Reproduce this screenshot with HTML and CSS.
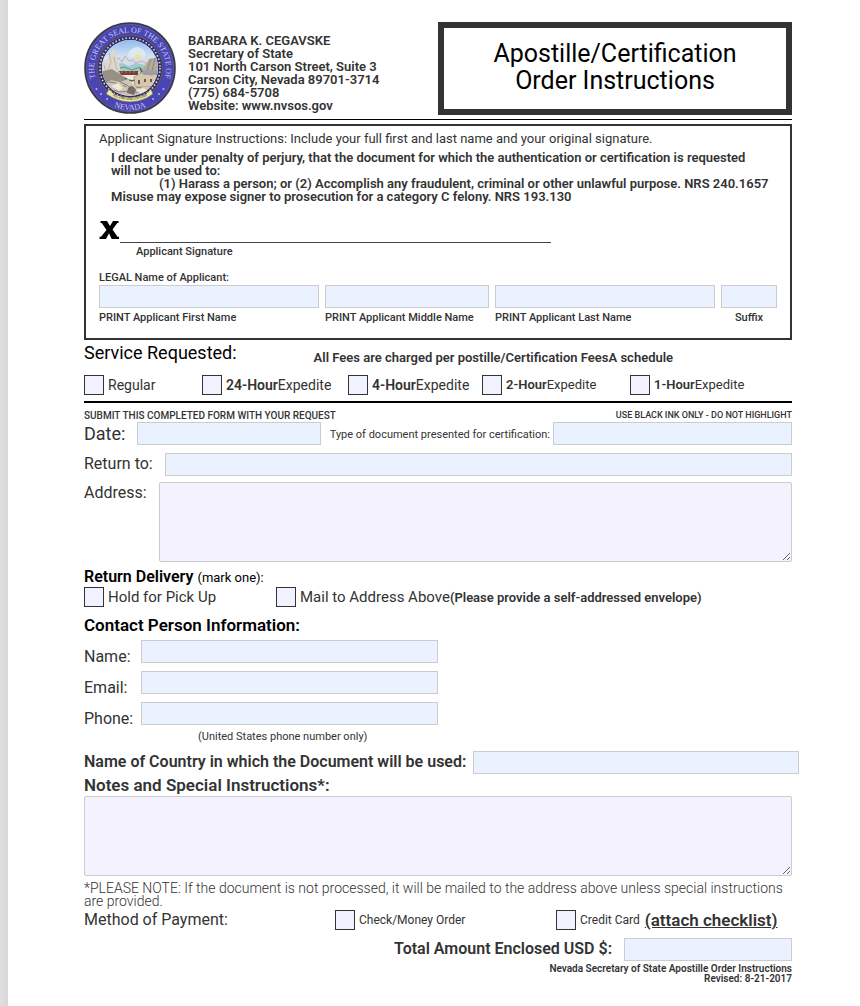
FILE: index.html
```html
<!DOCTYPE html>
<html lang="en">
<head>
<meta charset="utf-8">
<title>Apostille/Certification Order Instructions</title>
<link rel="stylesheet" href="styles.css">
</head>
<body>
<form class="sheet">
  <header class="head">
    <div class="office">
      <svg class="seal" viewBox="0 0 92 92" role="img" aria-label="The Great Seal of the State of Nevada">
        <defs>
          <path id="arc-top" d="M13.500 62A36 36 0 1 1 78.500 62"/>
          <path id="arc-bottom" d="M16 75.500A42 42 0 0 0 76 75.500"/>
          <path id="arc-motto" d="M27 73Q46 83 65 73"/>
          <clipPath id="scene"><circle cx="46" cy="46" r="28"/></clipPath>
          <linearGradient id="sky" x1="0" y1="0" x2="0" y2="1"><stop offset="0" stop-color="#8fb9ea"/><stop offset="1" stop-color="#e6effa"/></linearGradient>
        </defs>
        <circle cx="46" cy="46" r="45" fill="#4945b5" stroke="#3c3946" stroke-width="1.600"/>
        <circle cx="46" cy="46" r="43.500" fill="none" stroke="#66607f" stroke-width=".7"/>
        <circle cx="46" cy="46" r="32.500" fill="#302e6c" stroke="#5b5262" stroke-width="1.600"/>
        <circle cx="46" cy="46" r="30" fill="none" stroke="#d5d3ec" stroke-width="1.700" stroke-dasharray="1.500 2"/>
        <circle cx="46" cy="46" r="28" fill="#eeeade"/>
        <g clip-path="url(#scene)">
          <rect x="17" y="17" width="58" height="24" fill="url(#sky)"/>
          <circle cx="53" cy="34" r="9" fill="#dbe9f4"/><ellipse cx="54" cy="35" rx="4" ry="2.500" fill="#f2e48e"/>
          <path d="M22 42l8-8 5 2 6-5 5 5 5-1 6 2 6-4 12 11v8H22z" fill="#d9dce6"/>
          <path d="M31 38l4-2 3 4 3-6 4 5 4-1 2 3 7-2 6 4" fill="none" stroke="#a3acbf" stroke-width=".8"/>
          <path d="M30 43l8-2 7 3 7-3 9 2v7H34z" fill="#9fcac7"/>
          <path d="M32 47l8-2 8 3 8-3" fill="none" stroke="#5a9396"/>
          <path d="M15 41l10-5 4-10c3 3 3 9 5 12l3 12 5 5-6 10H15z" fill="#ded7ce"/>
          <path d="M25 31l2 9-3 8m6-13l2 10 4 7M20 43l3 11" fill="none" stroke="#bab2a8"/>
          <path d="M16 50l12-3 14 9 3 10-22 2z" fill="#969087"/>
          <path d="M35 49h19v4H37z" fill="#763f38"/>
          <path d="M37 50h2m2 0h2m2 0h2m2 0h2" stroke="#b0604e" stroke-width="1.500"/>
          <path d="M76 35l-11 2-5 8-4 5v8h20z" fill="#b3ac9e"/>
          <path d="M67 37l-4 12M71 36l-3 14" stroke="#8d867a" fill="none"/>
          <path d="M56 46q6 9-4 12-7 2-11-2" fill="none" stroke="#5d5953" stroke-width="1.500"/>
          <path d="M50 55l8-5 8 3 8-1v13H51z" fill="#d6c7ad" stroke="#817363" stroke-width=".6"/>
          <path d="M57 51l7-4 10 2v4H60z" fill="#9aa1a6"/>
          <path d="M54 58h2v4h-2zm6-1h2v3h-2zm6 0h2v3h-2zm5 0h2v4h-2z" fill="#695c4c"/>
          <path d="M20 63l7-5 9 2 8-3 7 7 17 2v10H24z" fill="#cdc6b9"/>
          <path d="M25 60l7 1 2 5m2-6l7 3 4 4m-17 1l6 2 10-1 8 2m-15-8l4 2m9 0l6 1" fill="none" stroke="#8b8376"/>
          <path d="M44 66q4-5 8 2l-2 5-7-2z" fill="#756d65"/>
          <path d="M27 64l7-3 5 5-4 3zm25 4l7-2 6 3-7 3z" fill="#f0e8d8"/>
        </g>
        <path d="M25 67l5 5q16 7 32 0l5-5 2 5-6 4q-17 8-34 0l-7-4z" fill="#ece6aa" stroke="#5c5644" stroke-width=".6"/>
        <text class="motto"><textPath href="#arc-motto" startOffset="50%">ALL FOR OUR COUNTRY</textPath></text>
        <text class="ring"><textPath href="#arc-top" startOffset="50%">THE GREAT SEAL OF THE STATE OF</textPath></text>
        <text class="ring"><textPath href="#arc-bottom" startOffset="50%">NEVADA</textPath></text>
        <g fill="#b9b5e2"><circle cx="12.500" cy="67" r="1"/><circle cx="17" cy="72" r="1"/><circle cx="23" cy="77" r="1"/><circle cx="79.500" cy="67" r="1"/><circle cx="75" cy="72" r="1"/><circle cx="69" cy="77" r="1"/></g>
      </svg>
      <address class="contact">BARBARA K. CEGAVSKE<br>Secretary of State<br>101 North Carson Street, Suite 3<br>Carson City, Nevada 89701-3714<br>(775) 684-5708<br>Website: www.nvsos.gov</address>
    </div>
    <h1 class="title">Apostille/Certification<br>Order Instructions</h1>
  </header>

  <section class="applicant">
    <p class="instructions">Applicant Signature Instructions: Include your full first and last name and your original signature.</p>
    <div class="declaration">
      <p class="oath">I declare under penalty of perjury, that the document for which the authentication or certification is requested will not be used to:</p>
      <p class="clause">(1) Harass a person; or (2) Accomplish any fraudulent, criminal or other unlawful purpose. NRS 240.1657</p>
      <p>Misuse may expose signer to prosecution for a category C felony. NRS 193.130</p>
    </div>
    <div class="signature">
      <svg class="cross" viewBox="0 0 20 18" aria-hidden="true"><path d="M1 0h6.500l3 5 3-5H19v2h-1.200L13 8.500l5 7.300h1.500V18h-7.300L9.500 12.300 6.500 18H0v-2.200h1.500L7 9 2.200 2H1z"/></svg>
      <span class="line"></span>
    </div>
    <p class="signature-label">Applicant Signature</p>
    <p class="legal">LEGAL Name of Applicant:</p>
    <div class="names">
      <label class="name"><input class="field" type="text">PRINT Applicant First Name</label>
      <label class="name"><input class="field" type="text">PRINT Applicant Middle Name</label>
      <label class="name"><input class="field" type="text">PRINT Applicant Last Name</label>
      <label class="name name-suffix"><input class="field" type="text">Suffix</label>
    </div>
  </section>

  <section class="service">
    <div class="service-head">
      <h2 class="service-title">Service Requested:</h2>
      <p class="fees">All Fees are charged per postille/Certification FeesA schedule</p>
    </div>
    <div class="speeds">
      <label class="check"><input type="checkbox"><span>Regular</span></label>
      <label class="check"><input type="checkbox"><span><b>24-Hour</b>Expedite</span></label>
      <label class="check"><input type="checkbox"><span><b>4-Hour</b>Expedite</span></label>
      <label class="check check-small"><input type="checkbox"><span><b>2-Hour</b>Expedite</span></label>
      <label class="check check-small"><input type="checkbox"><span><b>1-Hour</b>Expedite</span></label>
    </div>
  </section>

  <section class="request">
    <div class="notices"><span>SUBMIT THIS COMPLETED FORM WITH YOUR REQUEST</span><span class="ink">USE BLACK INK ONLY - DO NOT HIGHLIGHT</span></div>
    <div class="row row-date">
      <label class="label-large" for="date">Date:</label><input class="field" id="date" type="text">
      <label class="label-small" for="doctype">Type of document presented for certification:</label><input class="field" id="doctype" type="text">
    </div>
    <div class="row row-return"><label for="return">Return to:</label><input class="field" id="return" type="text"></div>
    <div class="row row-address"><label for="address">Address:</label><textarea class="area" id="address"></textarea></div>
  </section>

  <section class="delivery">
    <h2 class="subhead">Return Delivery <small>(mark one):</small></h2>
    <div class="delivery-options">
      <label class="check check-large"><input type="checkbox"><span>Hold for Pick Up</span></label>
      <label class="check check-large"><input type="checkbox"><span>Mail to Address Above<b class="envelope">(Please provide a self-addressed envelope)</b></span></label>
    </div>
  </section>

  <section class="person">
    <h2 class="subhead subhead-large">Contact Person Information:</h2>
    <div class="person-fields">
      <label for="name">Name:</label><input class="field" id="name" type="text">
      <label for="email">Email:</label><input class="field" id="email" type="email">
      <label for="phone">Phone:</label><input class="field" id="phone" type="tel">
    </div>
    <p class="phone-note">(United States phone number only)</p>
  </section>

  <section class="notes">
    <div class="row row-country"><label class="strong" for="country">Name of Country in which the Document will be used:</label><input class="field" id="country" type="text"></div>
    <label class="strong notes-label" for="notes">Notes and Special Instructions*:</label>
    <textarea class="area" id="notes"></textarea>
    <p class="please">*PLEASE NOTE: If the document is not processed, it will be mailed to the address above unless special instructions are provided.</p>
  </section>

  <section class="payment">
    <span>Method of Payment:</span>
    <label class="check check-tiny"><input type="checkbox"><span>Check/Money Order</span></label>
    <div class="card">
      <label class="check check-tiny"><input type="checkbox"><span>Credit Card</span></label>
      <a class="attach" href="#checklist">(attach checklist)</a>
    </div>
  </section>
  <div class="total"><label class="strong" for="total">Total Amount Enclosed USD $:</label><input class="field" id="total" type="text"></div>
  <footer class="foot">Nevada Secretary of State Apostille Order Instructions<br>Revised: 8-21-2017</footer>
</form>
</body>
</html>
```
FILE: styles.css
```css
* { box-sizing: border-box; }
body {
  margin: 0;
  padding-left: 8px;
  background: linear-gradient(90deg, #e0e0e0, #d8d8d8 8px);
  color: #333;
  font: 400 16px/20px Roboto, "Liberation Sans", sans-serif;
}
h1, h2, p { margin: 0; font-weight: inherit; }
b { font-weight: 600; }
.sheet { min-height: 100vh; padding: 22px 68px 20px 76px; background: #fff; }

.head { display: grid; grid-template-columns: 1fr 1fr; padding-bottom: 4px; border-bottom: 1px solid #000; }
.office { display: flex; gap: 12px; }
.seal { flex: none; width: 92px; height: 92px; }
.ring { fill: #cbc8ea; font: 500 8px "Liberation Serif", serif; text-anchor: middle; }
.motto { fill: #4d492f; font: 700 3px "Liberation Serif", serif; text-anchor: middle; }
.contact { padding-top: 12px; font: 600 13px/13px Roboto, sans-serif; }
.title { display: grid; place-items: center; min-height: 93px; padding-bottom: 4px; border: 6px solid #333; color: #000; font-size: 25px; line-height: 27px; text-align: center; font-weight: 400; }

.applicant { margin-top: 4px; padding: 5px 13px 10px; border: 2px solid #333; }
.instructions { font-size: 13px; line-height: 16px; }
.declaration { padding: 4px 0 0 12px; font-size: 13px; line-height: 13px; font-weight: 600; }
.oath { padding-right: 12px; }
.clause { padding-left: 48px; }
.signature { display: flex; margin-top: 18px; height: 22px; }
.cross { width: 21px; height: 18px; }
.line { width: 431px; border-bottom: 1px solid #444; }
.signature-label { padding-left: 37px; font-size: 11px; line-height: 18px; font-weight: 500; }
.legal { margin-top: 9px; font-size: 11px; line-height: 15px; font-weight: 500; }
.names { display: grid; grid-template-columns: 220fr 164fr 220fr 56fr; gap: 6px; }
.name { font-size: 11px; line-height: 20px; font-weight: 500; }
.name-suffix { text-align: center; }

.field { display: block; width: 100%; min-width: 0; height: 23px; padding: 0 4px; border: 1px solid #ccc; border-radius: 0; background: #ebf2ff; color: #333; font: 400 14px Roboto, sans-serif; }
.area { display: block; width: 100%; height: 80px; padding: 4px; border: 1px solid #ccc; border-radius: 2px; background: #f4f2ff; color: #333; font: 400 14px Roboto, sans-serif; resize: both; }

.service { padding-bottom: 6px; border-bottom: 2px solid #000; }
.service-head { display: flex; gap: 77px; align-items: flex-start; padding: 2px 0 9px; }
.service-title { color: #000; font-size: 18px; line-height: 22px; }
.fees { padding-top: 8px; font-size: 13px; line-height: 16px; font-weight: 600; }
.speeds { display: grid; grid-template-columns: 118fr 146fr 134fr 148fr 162fr; }
.check { display: flex; align-items: center; gap: 4px; font-size: 14px; white-space: nowrap; }
.check input { appearance: none; flex: none; width: 20px; height: 20px; margin: 0; border: 1px solid #333; background: #f0f2ff; }
.check input:checked { background: #333; box-shadow: inset 0 0 0 4px #f0f2ff; }
.check-small { font-size: 13px; }
.check-tiny { font-size: 12px; }
.check-large { font-size: 15px; }

.notices { display: flex; justify-content: space-between; padding-top: 6px; font-size: 10px; line-height: 13px; font-weight: 500; }
.ink { font-size: 9px; }
.row { display: flex; }
.row-date { gap: 9px; }
.row-date label { white-space: nowrap; }
.label-large { width: 44px; font-size: 18px; line-height: 23px; }
#date { flex: 182 1 0; }
#doctype { flex: 240 1 0; margin-left: -6px; }
.label-small { font-size: 11px; line-height: 26px; font-weight: 400; }
.row-return { padding: 5px 0 6px; }
.row-return label { flex: none; width: 81px; line-height: 22px; }
.row-address label { flex: none; width: 75px; line-height: 22px; }

.delivery { padding-top: 5px; }
.subhead { color: #000; font-size: 16px; line-height: 20px; font-weight: 600; }
.subhead-large { font-size: 17px; }
.subhead small { font-size: 13px; line-height: 1; font-weight: 400; }
.delivery-options { display: grid; grid-template-columns: 192fr 516fr; }
.envelope { font-size: 13px; line-height: 1; }

.person { padding-top: 8px; }
.person-fields { display: grid; grid-template-columns: 57px 1fr; gap: 8px 0; width: 50%; padding-top: 5px; }
.person-fields label { line-height: 23px; padding-top: 5px; height: 23px; }
.phone-note { padding: 4px 0 6px 114px; font-size: 11px; line-height: 16px; }
.strong { font-size: 16px; line-height: 21px; font-weight: 600; white-space: nowrap; }
.notes-label { display: block; font-size: 17px; line-height: 22px; }
.row-country { gap: 7px; margin-right: -7px; }
.please { padding: 6px 0 2px; font-size: 14px; line-height: 13px; font-weight: 300; }

.payment { display: grid; grid-template-columns: 251fr 221fr 236fr; }
.card { display: flex; align-items: center; gap: 5px; }
.attach { color: inherit; font-size: 17px; font-weight: 600; white-space: nowrap; }
.total { display: grid; grid-template-columns: 1fr 168px; gap: 12px; padding-top: 8px; text-align: right; }
.foot { padding-top: 3px; font-size: 10px; line-height: 10px; font-weight: 600; text-align: right; }
```
